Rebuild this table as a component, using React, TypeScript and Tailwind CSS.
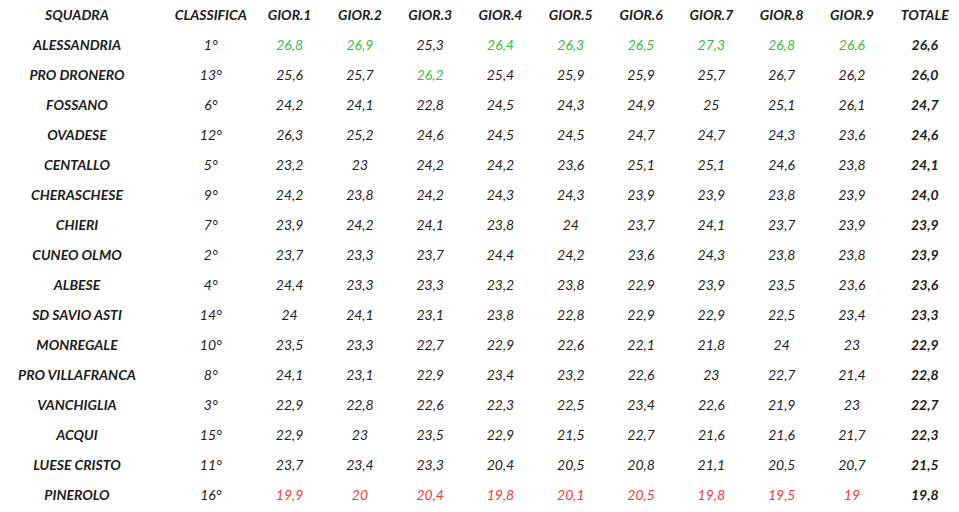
const RED = 'r';

type Row = {
  team: string;
  pos: string;
  days: string[];
  tone?: string;
  green?: number[];
  total: string;
};

const rows: Row[] = [
  { team: 'ALESSANDRIA', pos: '1°', days: ['26,8', '26,9', '25,3', '26,4', '26,3', '26,5', '27,3', '26,8', '26,6'], green: [0, 1, 3, 4, 5, 6, 7, 8], total: '26,6' },
  { team: 'PRO DRONERO', pos: '13°', days: ['25,6', '25,7', '26,2', '25,4', '25,9', '25,9', '25,7', '26,7', '26,2'], green: [2], total: '26,0' },
  { team: 'FOSSANO', pos: '6°', days: ['24,2', '24,1', '22,8', '24,5', '24,3', '24,9', '25', '25,1', '26,1'], total: '24,7' },
  { team: 'OVADESE', pos: '12°', days: ['26,3', '25,2', '24,6', '24,5', '24,5', '24,7', '24,7', '24,3', '23,6'], total: '24,6' },
  { team: 'CENTALLO', pos: '5°', days: ['23,2', '23', '24,2', '24,2', '23,6', '25,1', '25,1', '24,6', '23,8'], total: '24,1' },
  { team: 'CHERASCHESE', pos: '9°', days: ['24,2', '23,8', '24,2', '24,3', '24,3', '23,9', '23,9', '23,8', '23,9'], total: '24,0' },
  { team: 'CHIERI', pos: '7°', days: ['23,9', '24,2', '24,1', '23,8', '24', '23,7', '24,1', '23,7', '23,9'], total: '23,9' },
  { team: 'CUNEO OLMO', pos: '2°', days: ['23,7', '23,3', '23,7', '24,4', '24,2', '23,6', '24,3', '23,8', '23,8'], total: '23,9' },
  { team: 'ALBESE', pos: '4°', days: ['24,4', '23,3', '23,3', '23,2', '23,8', '22,9', '23,9', '23,5', '23,6'], total: '23,6' },
  { team: 'SD SAVIO ASTI', pos: '14°', days: ['24', '24,1', '23,1', '23,8', '22,8', '22,9', '22,9', '22,5', '23,4'], total: '23,3' },
  { team: 'MONREGALE', pos: '10°', days: ['23,5', '23,3', '22,7', '22,9', '22,6', '22,1', '21,8', '24', '23'], total: '22,9' },
  { team: 'PRO VILLAFRANCA', pos: '8°', days: ['24,1', '23,1', '22,9', '23,4', '23,2', '22,6', '23', '22,7', '21,4'], total: '22,8' },
  { team: 'VANCHIGLIA', pos: '3°', days: ['22,9', '22,8', '22,6', '22,3', '22,5', '23,4', '22,6', '21,9', '23'], total: '22,7' },
  { team: 'ACQUI', pos: '15°', days: ['22,9', '23', '23,5', '22,9', '21,5', '22,7', '21,6', '21,6', '21,7'], total: '22,3' },
  { team: 'LUESE CRISTO', pos: '11°', days: ['23,7', '23,4', '23,3', '20,4', '20,5', '20,8', '21,1', '20,5', '20,7'], total: '21,5' },
  { team: 'PINEROLO', pos: '16°', days: ['19,9', '20', '20,4', '19,8', '20,1', '20,5', '19,8', '19,5', '19'], tone: RED, total: '19,8' },
];

const heads = ['GIOR.1', 'GIOR.2', 'GIOR.3', 'GIOR.4', 'GIOR.5', 'GIOR.6', 'GIOR.7', 'GIOR.8', 'GIOR.9'];

const grid =
  'grid grid-cols-[162px_77px_repeat(9,60px)_65px] gap-x-[10.3px] h-[30.06px] items-center';

function dayColor(r: Row, i: number) {
  if (r.tone === RED) return 'text-[#f23b36]';
  if (r.green && r.green.includes(i)) return 'text-[#36bb40]';
  return 'text-[#1c1c1c]';
}

export default function App() {
  return (
    <div
      className="w-[959px] h-[512px] bg-white text-[14px] italic text-[#1c1c1c] overflow-hidden"
      style={{ fontFamily: 'Lato, "Open Sans", sans-serif' }}
    >
      <div className="-mt-px">
        <div className={`${grid} font-bold`}>
          <div className="pr-[8px] text-center">SQUADRA</div>
          <div className="text-center whitespace-nowrap">CLASSIFICA</div>
          {heads.map((h) => (
            <div key={h} className="text-center whitespace-nowrap">{h}</div>
          ))}
          <div className="text-center">TOTALE</div>
        </div>

        {rows.map((r) => (
          <div key={r.team} className={grid}>
            <div className="pr-[8px] text-center font-bold whitespace-nowrap">{r.team}</div>
            <div className="text-center">{r.pos}</div>
            {r.days.map((d, i) => (
              <div key={i} className={`text-center ${dayColor(r, i)}`}>{d}</div>
            ))}
            <div className="text-center font-bold">{r.total}</div>
          </div>
        ))}
      </div>
    </div>
  );
}
